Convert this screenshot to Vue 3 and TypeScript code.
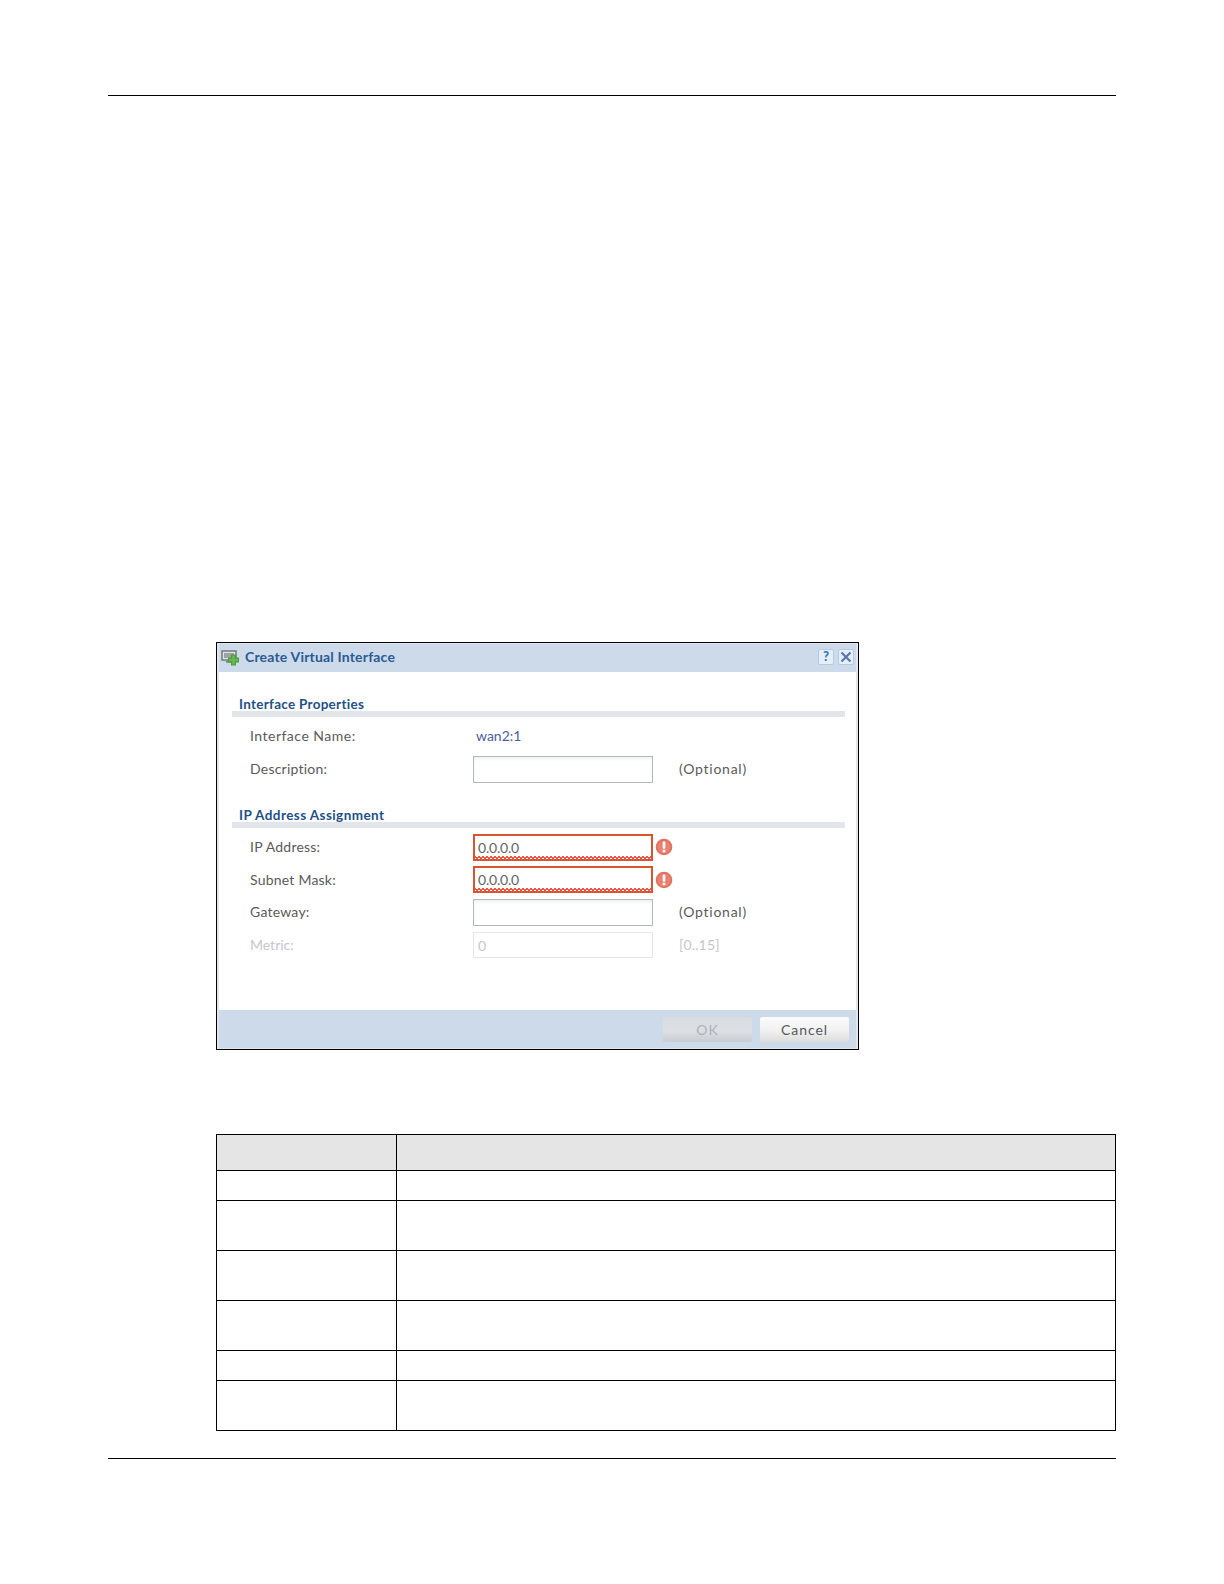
<script setup lang="ts">
interface Field {
  label: string
  value?: string
  hint?: string
  kind: 'normal' | 'error' | 'disabled'
}
const fieldsTop: Field[] = [{ label: 'Description:', hint: '(Optional)', kind: 'normal' }]
const fieldsIp: Field[] = [
  { label: 'IP Address:', value: '0.0.0.0', kind: 'error' },
  { label: 'Subnet Mask:', value: '0.0.0.0', kind: 'error' },
  { label: 'Gateway:', hint: '(Optional)', kind: 'normal' },
  { label: 'Metric:', value: '0', hint: '[0..15]', kind: 'disabled' },
]
const rowHeights = [30, 50, 50, 50, 30, 50]
</script>

<template>
  <div class="page">
    <div class="rule top-rule"></div>

    <section class="dialog">
      <header class="title-bar">
        <svg class="title-icon" width="20" height="18" viewBox="0 0 20 18">
          <rect x="1" y="2" width="14" height="9" fill="#dfe3e3" stroke="#6d7272" stroke-width="1.4" />
          <rect x="3" y="4" width="10" height="5" fill="#9aa3a5" />
          <rect x="5" y="11.700" width="5" height="2" fill="#7c8284" />
          <rect x="7" y="8.500" width="11" height="5" fill="#4c9a3c" />
          <rect x="10" y="5.500" width="5" height="11" fill="#4c9a3c" />
          <rect x="8" y="9.700" width="9" height="2.600" fill="#68b850" />
          <rect x="11.200" y="6.500" width="2.600" height="9" fill="#68b850" />
        </svg>
        <span class="title-text">Create Virtual Interface</span>
        <span class="title-btns">
          <span class="tb-btn help">?</span>
          <span class="tb-btn">
            <svg width="12" height="12" viewBox="0 0 12 12"><path d="M1.500 1.500l9 9M10.500 1.500l-9 9" stroke="#5a76ac" stroke-width="2.200" /></svg>
          </span>
        </span>
      </header>

      <div class="body">
        <h3 class="section first">Interface Properties</h3>
        <div class="bar"></div>
        <div class="rows rows-a">
          <div class="row name-row">
            <span class="label">Interface Name:</span>
            <span class="value">wan2:1</span>
          </div>
          <div v-for="f in fieldsTop" :key="f.label" class="row">
            <span class="label">{{ f.label }}</span>
            <span class="input"></span>
            <span class="hint">{{ f.hint }}</span>
          </div>
        </div>

        <h3 class="section second">IP Address Assignment</h3>
        <div class="bar"></div>
        <div class="rows rows-b">
          <div v-for="f in fieldsIp" :key="f.label" class="row" :class="f.kind">
            <span class="label">{{ f.label }}</span>
            <span class="input">
              {{ f.value }}
              <i v-if="f.kind === 'error'" class="squiggle"></i>
            </span>
            <svg v-if="f.kind === 'error'" class="err" width="18" height="18" viewBox="0 0 18 18">
              <circle cx="9" cy="9" r="8.300" fill="#e2705c" />
              <circle cx="9" cy="9" r="6.500" fill="#ea8273" />
              <rect x="7.700" y="3.500" width="2.600" height="7.300" rx="1" fill="#fff" />
              <circle cx="9" cy="13" r="1.500" fill="#fff" />
            </svg>
            <span v-if="f.hint" class="hint">{{ f.hint }}</span>
          </div>
        </div>
      </div>

      <footer class="foot">
        <button class="btn disabled" type="button">OK</button>
        <button class="btn" type="button">Cancel</button>
      </footer>
    </section>

    <table class="table">
      <colgroup>
        <col class="col-a" />
        <col />
      </colgroup>
      <thead>
        <tr class="head"><th></th><th></th></tr>
      </thead>
      <tbody>
        <tr v-for="(h, i) in rowHeights" :key="i" :style="{ height: h + 'px' }"><td></td><td></td></tr>
      </tbody>
    </table>

    <div class="rule bottom-rule"></div>
  </div>
</template>

<style>
html, body { margin: 0; background: #fff; }
</style>

<style scoped>
.page {
  width: 1224px;
  height: 1584px;
  box-sizing: border-box;
  padding: 95px 108px 0;
  background: #fff;
  overflow: hidden;
  font-family: "Lato", "Open Sans", sans-serif;
}
.rule { height: 1px; background: #000; }
.dialog {
  width: 643px;
  height: 408px;
  margin: 546px 0 0 108px;
  box-sizing: border-box;
  border: 1px solid #000;
  padding: 1px 2px 1px;
  background: #fff;
  box-shadow: inset 0 0 0 2px #dfe6ef;
  display: flex;
  flex-direction: column;
}
.title-bar {
  height: 28px;
  box-sizing: border-box;
  padding-bottom: 3px;
  background: #cddaea;
  display: flex;
  align-items: center;
  flex: none;
}
.title-icon { margin-left: 2px; margin-top: 2px; flex: none; }
.title-text {
  margin-left: 4px;
  color: #2a5a94;
  font-size: 14px;
  font-weight: 700;
  letter-spacing: 0.18px;
}
.title-btns { margin-left: auto; margin-right: 2px; display: flex; gap: 4px; }
.tb-btn {
  width: 16px;
  height: 16px;
  border-radius: 2px;
  background: #e6eff9;
  border: 1px solid #b8cadf;
  box-sizing: border-box;
  display: flex;
  align-items: center;
  justify-content: center;
}
.help { color: #2f7db5; font-size: 13px; font-weight: 900; line-height: 1; }
.body { flex: 1; padding: 0 11px 0 13px; }
.section {
  margin: 0 0 0 7px;
  color: #234f87;
  font-size: 13.500px;
  font-weight: 700;
  line-height: 18px;
}
.section.first { padding-top: 23px; letter-spacing: 0.28px; }
.section.second { padding-top: 21px; letter-spacing: 0.42px; }
.bar { height: 6px; background: #e2e5e9; margin-top: -2px; }
.rows { display: flex; flex-direction: column; }
.rows-a { padding-top: 4px; height: 64px; }
.rows-b { padding-top: 3px; }
.row {
  height: 32px;
  flex: none;
  display: flex;
  align-items: center;
  padding-left: 18px;
  position: relative;
  color: #5a5a5a;
  font-size: 14px;
}
.rows-b .row { height: 32.500px; }
.name-row { height: 30px; margin-bottom: 2px; }
.label { width: 223px; flex: none; letter-spacing: 0.22px; margin-top: -1px; }
.name-row .label { letter-spacing: 0.5px; }
.value { color: #4f5e9c; margin-left: 3px; margin-top: -1px; }
.input {
  width: 180px;
  height: 27px;
  flex: none;
  box-sizing: border-box;
  border: 1px solid #b5b8bb;
  box-shadow: inset 0 2px 3px #eef0f1;
  padding-left: 4px;
  line-height: 25px;
  color: #5f6468;
  letter-spacing: -0.2px;
  position: relative;
}
.hint { margin-left: 26px; color: #5a5a5a; letter-spacing: 0.75px; margin-top: -1px; }
.err { margin-left: 2px; flex: none; }
.error .input {
  border: 2px solid #d9552f;
  box-shadow: none;
  padding-left: 3px;
  line-height: 23px;
}
.squiggle {
  position: absolute;
  left: 0;
  right: 0;
  bottom: 0;
  height: 3px;
  background-image:
    linear-gradient(135deg, transparent 45%, #e8584a 45%, #e8584a 75%, transparent 75%),
    linear-gradient(45deg, transparent 45%, #e8584a 45%, #e8584a 75%, transparent 75%);
  background-size: 4px 3px;
  background-position: 0 0, 2px 0;
}
.disabled .label { color: #c4c7ca; letter-spacing: 0; }
.disabled .hint { color: #c4c7ca; letter-spacing: 0.15px; }
.disabled .input {
  color: #c4c7ca;
  border-color: #e4e6e8;
  box-shadow: none;
  height: 26px;
}
.foot {
  height: 38px;
  flex: none;
  background: #cddaea;
  display: flex;
  justify-content: flex-end;
  align-items: center;
  gap: 8px;
  padding-right: 7px;
}
.btn {
  width: 89px;
  height: 25px;
  padding: 0;
  border: 0;
  border-radius: 2px;
  background: linear-gradient(#fbfbfb 0%, #f1f1f1 55%, #dcdcdc 100%);
  color: #55585c;
  font-family: inherit;
  font-size: 14px;
  letter-spacing: 0.9px;
}
.btn.disabled { background: linear-gradient(#d9dde2 0%, #dcdfe3 55%, #c9cdd2 100%); color: #aeb2b6; }
.table {
  width: 900px;
  margin: 84px 0 0 108px;
  border-collapse: collapse;
  table-layout: fixed;
}
.col-a { width: 180px; }
.table th, .table td { border: 1.500px solid #000; padding: 0; }
.head { height: 36px; }
.head th { background: #e5e5e5; }
.bottom-rule { margin-top: 27px; }
</style>
